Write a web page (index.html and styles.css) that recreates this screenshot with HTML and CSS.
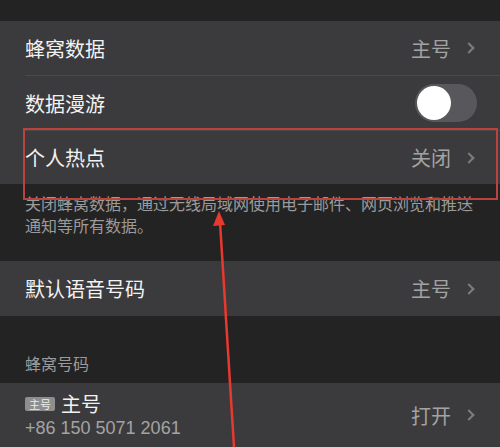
FILE: index.html
```html
<!DOCTYPE html>
<html lang="zh-CN">
<head>
    <meta charset="UTF-8">
    <meta name="viewport" content="width=device-width, initial-scale=1.0">
    <title>蜂窝网络</title>
    <link rel="stylesheet" href="styles.css">
</head>
<body>
    <div id="wrap">
        <div class="group first">
            <div class="row">
                <span class="label">蜂窝数据</span>
                <span class="value">主号<i class="chev"></i></span>
            </div>
            <div class="row">
                <span class="label">数据漫游</span>
                <span class="switch"><span class="knob"></span></span>
            </div>
            <div class="row">
                <span class="label">个人热点</span>
                <span class="value">关闭<i class="chev"></i></span>
            </div>
        </div>
        <p class="foot">关闭蜂窝数据，通过无线局域网使用电子邮件、网页浏览和推送<br>通知等所有数据。</p>

        <div class="group">
            <div class="row">
                <span class="label">默认语音号码</span>
                <span class="value">主号<i class="chev"></i></span>
            </div>
        </div>

        <div class="head">蜂窝号码</div>
        <div class="group">
            <div class="row tall">
                <div class="sim">
                    <div class="simname"><span class="badge">主号</span>主号</div>
                    <div class="phone">+86 150 5071 2061</div>
                </div>
                <span class="value">打开<i class="chev"></i></span>
            </div>
        </div>

        <!-- annotation -->
        <div class="mark"></div>
        <svg class="arrow" width="500" height="447" viewBox="0 0 500 447">
            <line x1="220" y1="222" x2="234" y2="447" stroke="#e8392f" stroke-width="2.5"/>
            <polygon points="219,211 213,226 225,225" fill="#e8392f"/>
        </svg>
    </div>
</body>
</html>
```

FILE: styles.css
```css
* {
    margin: 0;
    padding: 0;
    box-sizing: border-box;
}
body {
    width: 500px;
    height: 447px;
    background: #232323;
    font-family: "Noto Sans CJK SC", "Noto Sans", sans-serif;
    overflow: hidden;
}

#wrap {
    position: relative;
    width: 500px;
    height: 447px;
    padding-top: 21px;
}

.group {
    background: #3b3b3d;
}

.row {
    height: 55px;
    margin-left: 25px;
    padding-right: 25px;
    display: flex;
    align-items: center;
    justify-content: space-between;
    border-bottom: 1px solid #4a4a4c;
}
.row:last-child {
    border-bottom: none;
}
.first .row:last-child {
    height: 53px;
}

.label {
    color: #f2f2f2;
    font-size: 20px;
}

.value {
    color: #a3a3a3;
    font-size: 20px;
    display: flex;
    align-items: center;
}

.chev {
    display: inline-block;
    width: 8px;
    height: 8px;
    border-top: 2px solid #7c7c7e;
    border-right: 2px solid #7c7c7e;
    transform: rotate(45deg);
    margin-left: 14px;
    margin-right: 2px;
}

.switch {
    width: 62px;
    height: 38px;
    border-radius: 19px;
    background: #58585c;
    padding: 2px;
    margin-right: -2px;
}
.knob {
    display: block;
    width: 34px;
    height: 34px;
    border-radius: 50%;
    background: #fff;
}

.foot {
    color: #9b9b9b;
    font-size: 16px;
    line-height: 22px;
    padding: 8px 0 0 25px;
    height: 77px;
    white-space: nowrap;
}

.head {
    color: #9b9b9b;
    font-size: 16px;
    height: 67px;
    padding: 35px 0 0 25px;
}

.tall {
    height: 64px;
}
.sim {
    display: flex;
    flex-direction: column;
}
.simname {
    color: #f2f2f2;
    font-size: 20px;
    line-height: 26px;
    display: flex;
    align-items: center;
}
.badge {
    background: #8e8e90;
    color: #ececec;
    font-size: 11px;
    line-height: 14px;
    padding: 0 4px;
    border-radius: 2px;
    margin-right: 6px;
}
.phone {
    color: #a3a3a3;
    font-family: "Liberation Sans", "Noto Sans", sans-serif;
    font-size: 18px;
    line-height: 22px;
}

.mark {
    position: absolute;
    left: 23px;
    top: 128px;
    width: 475px;
    height: 72px;
    border: 2px solid #b8433f;
}

.arrow {
    position: absolute;
    left: 0;
    top: 0;
}
```
